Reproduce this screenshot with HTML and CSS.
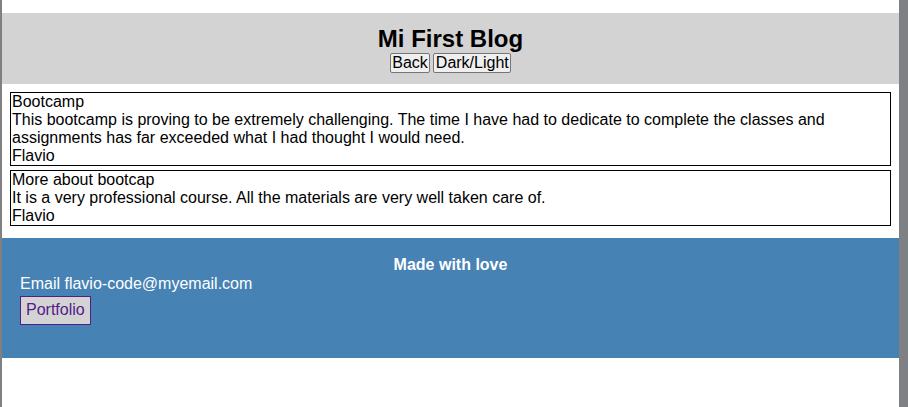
FILE: index.html
```html
<!DOCTYPE html>
<html lang="en">
<head>
<meta charset="utf-8">
<title>Mi First Blog</title>
<link rel="stylesheet" href="styles.css">
</head>
<body>
<div class="edge-left"></div>
<main class="page">
  <header class="site-header">
    <h1 class="title">Mi First Blog</h1>
    <div class="controls">
      <button class="btn">Back</button>
      <button class="btn">Dark/Light</button>
    </div>
  </header>
  <section class="posts">
    <article class="post">
      <div>Bootcamp</div>
      <div>This bootcamp is proving to be extremely challenging. The time I have had to dedicate to complete the classes and assignments has far exceeded what I had thought I would need.</div>
      <div>Flavio</div>
    </article>
    <article class="post">
      <div>More about bootcap</div>
      <div>It is a very professional course. All the materials are very well taken care of.</div>
      <div>Flavio</div>
    </article>
  </section>
  <footer class="site-footer">
    <div class="love">Made with love</div>
    <div class="email">Email flavio-code@myemail.com</div>
    <a class="portfolio" href="#">Portfolio</a>
  </footer>
</main>
<div class="edge-right"></div>
</body>
</html>
```

FILE: styles.css
```css
html, body {
  margin: 0;
  height: 100%;
}
body {
  display: flex;
  font-family: "Liberation Sans", Arial, sans-serif;
  font-size: 16px;
  line-height: 18px;
  color: #000;
  background: #fff;
}
.edge-left {
  width: 2px;
  background: #808080;
}
.edge-right {
  width: 9px;
  background: #7f8083;
}
.page {
  flex: 1;
  padding-top: 13px;
}
.site-header {
  background: #d3d3d3;
  text-align: center;
  padding: 12px 0 11px;
}
.title {
  margin: 0;
  font-size: 24px;
  line-height: 28px;
  font-weight: bold;
}
.controls {
  display: flex;
  justify-content: center;
  gap: 3px;
}
.btn {
  font-family: "Liberation Sans", Arial, sans-serif;
  font-size: 16px;
  line-height: 18px;
  padding: 0 1.5px;
  margin: 0;
  border: 1px solid #767676;
  border-radius: 2px;
  background: #efefef;
  color: #000;
}
.posts {
  display: flex;
  flex-direction: column;
  gap: 4px;
  margin: 8px 8px 12px;
}
.post {
  border: 1px solid #000;
  padding: 0 1px;
}
.site-footer {
  background: #4682b4;
  color: #fff;
  height: 120px;
  box-sizing: border-box;
  padding: 18px 18px 0;
}
.love {
  text-align: center;
  font-weight: bold;
}
.email {
  margin-top: 1px;
}
.portfolio {
  display: inline-block;
  margin-top: 3px;
  padding: 4px 5px 5px;
  background: #d3d3d3;
  color: #551a8b;
  border: 1px solid #551a8b;
  text-decoration: none;
}
```
